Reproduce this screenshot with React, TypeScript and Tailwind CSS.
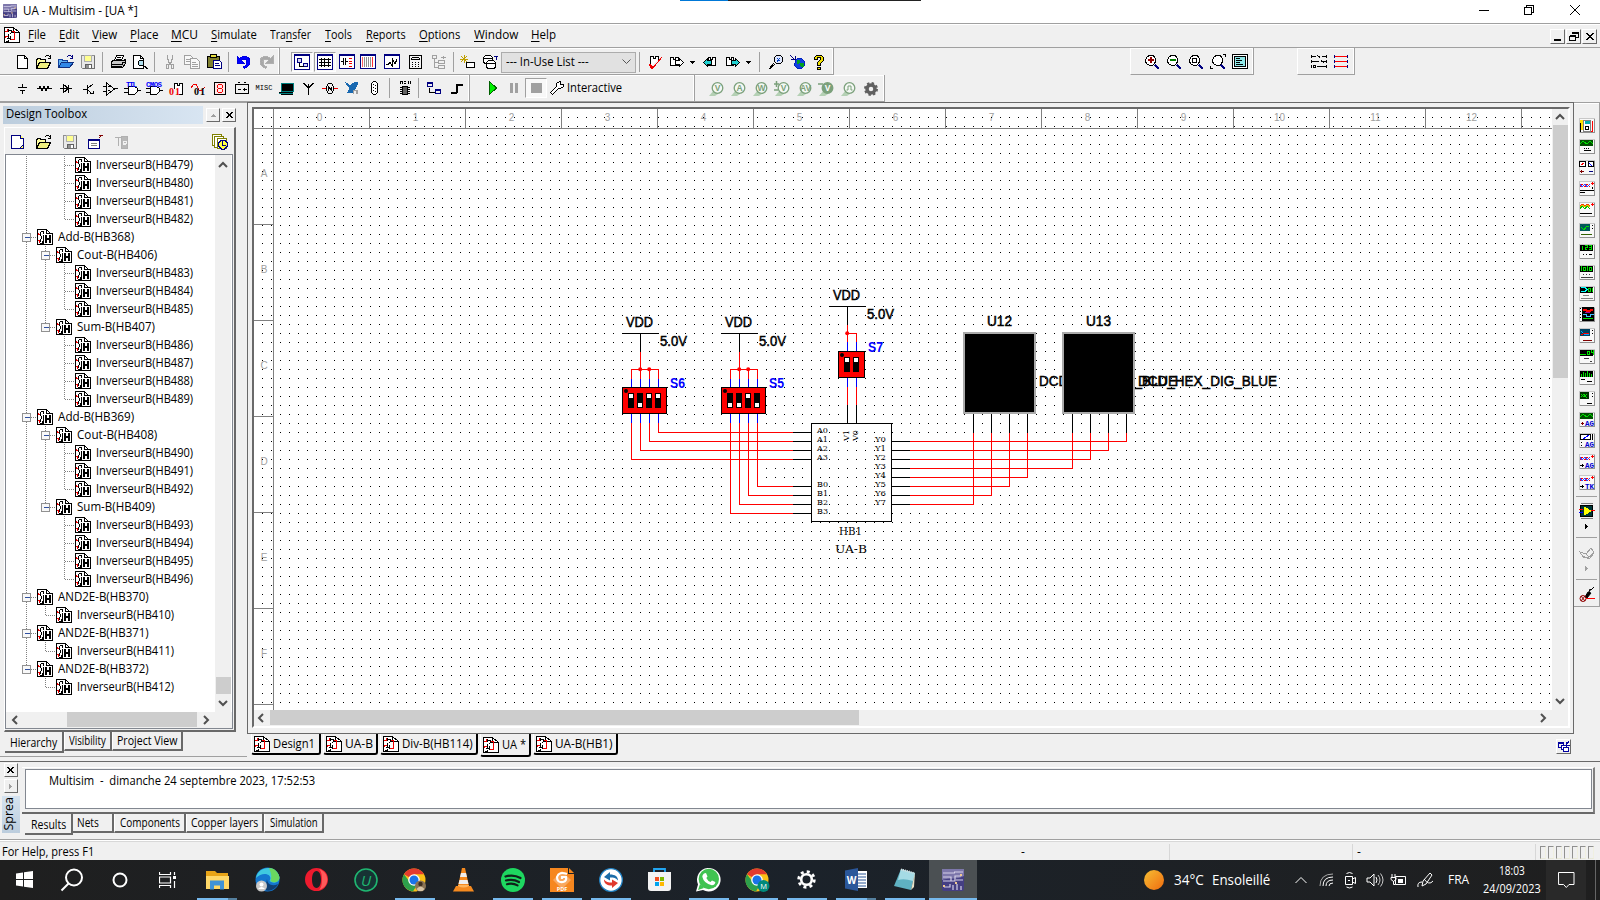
import React, { useLayoutEffect, useRef, useState } from "react";
import { FaWhatsapp } from "react-icons/fa";

/* ---------- helpers ---------- */

/** Text condensed or stretched horizontally to a known advance width. */
function Fit({ w, children, className = "" }: { w: number; children: React.ReactNode; className?: string }) {
  const ref = useRef<HTMLSpanElement>(null);
  const [k, setK] = useState(1);
  useLayoutEffect(() => {
    if (ref.current) setK(w / ref.current.offsetWidth);
  }, [w]);
  return (
    <span className={`inline-block shrink-0 whitespace-nowrap ${className}`} style={{ width: w }}>
      <span ref={ref} className="inline-block origin-left whitespace-pre" style={{ transform: `scaleX(${k})` }}>
        {children}
      </span>
    </span>
  );
}

type Shape = [d: string, stroke: string, fill?: string];

function Ico({ s, w = 16, h = 16, smooth = false }: { s: Shape[]; w?: number; h?: number; smooth?: boolean }) {
  return (
    <svg width={w} height={h} viewBox={`0 0 ${w} ${h}`} shapeRendering={smooth ? "auto" : "crispEdges"} className="block shrink-0">
      {s.map(([d, stroke, fill], i) => (
        <path key={i} d={d} stroke={stroke} fill={fill ?? "none"} />
      ))}
    </svg>
  );
}

function Cell({ children, className = "w-[22px]" }: { children?: React.ReactNode; className?: string }) {
  return <div className={`flex h-full shrink-0 items-center justify-center ${className}`}>{children}</div>;
}

function Sep({ className }: { className: string }) {
  return (
    <div className={`flex h-full shrink-0 items-center justify-center ${className}`}>
      <div className="h-5 w-px bg-[#a0a0a0]" />
    </div>
  );
}

/* ---------- icon data ---------- */
const K = "#000";
const N = "#000080";
const G = "#a0a0a0";
const R = "#f00000";

const icons: Record<string, Shape[]> = {
  blank: [["M3.5 1.5h7l3 3v10h-10z", K, "#fff"], ["M10.5 1.5v3h3", K]],
  open: [["M0.5 14.5v-9h1v-1h3v1h5v3", K, "#ffffa0"], ["M0.5 14.5l3-6h11l-3 6z", K, "#f0f080"], ["M9 2.5h1M10 1.5h3M13 2.5h1M14.5 1v4M12 4.5h3", K]],
  openBlue: [["M0.5 13.5v-8h4v1h5v2", "#1040a0", "#60b0f0"], ["M0.5 13.5l3-5h12l-4 5z", "#103080", "#3088e8"], ["M9 2.5h1M10 1.5h3M13 2.5h1M14.5 1v4M12 4.5h3", N]],
  save: [["M1.5 1.5h13v13h-12l-1-1z", "#909090", "#e8e8e8"], ["M4.5 1.5h7v6h-7z", "#b0b0b0", "#ffff90"], ["M5.5 10.5h6v4h-6z", "#606060", "#909090"], ["M10 11v3M9 11v3", "#fff"], ["M14.500 2v13M3 14.500h12", "#707070"]],
  print: [["M4.5 6.5l2-5h7l-2 5", K, "#fff"], ["M7 3.5h4M6 5.5h5", K], ["M1.5 7.5l2-1h10l2-1v4l-3 4h-11z", K, "#c8c8c8"], ["M1.5 10.5h11v-3M13 8.5h2M2 12.5h10M2 13.500h10", K]],
  preview: [["M1.5 1.5h7l3 3v10h-10z", K, "#fff"], ["M8.5 1.5v3h3", K], ["M6.5 7.5l1-1h3l1 1v3l-1 1h-3l-1-1z", K, "#b0e0f0"], ["M11 11.5h1M12 12.5h2M13 13.5h2M14 14.5h2", K]],
  cut: [["M5.5 1v4l1 1v2l3 3M10.5 1v4l-1 1v2l-3 3", G], ["M4.5 10.5h2v4h-2zM9.5 10.5h2v4h-2z", G]],
  copy: [["M0.5 1.5h6l2 2v7h-8z", G, "#f8f8f8"], ["M6.5 4.5h6l3 3v7h-9z", G, "#f8f8f8"], ["M8 8.5h4M8 10.5h6M8 12.5h6M2 5.5h4M2 7.5h4", G]],
  paste: [["M1.5 2.5h12v11h-12z", K, "#808030"], ["M4.5 0.5h6v3h-6z", K, "#e8e040"], ["M7.5 6.5h6l2 2v6h-8z", N, "#fff"], ["M9 9.5h4M9 11.5h5", N]],
  undo: [["M1 2v7h7l-2.5-2.5c2-2 6-1.500 5.500 1.500c0 2-1.500 4-3.500 5l1 1.500c4-2 5.500-4 5.500-7c0-5-6-6.500-10.500-3z", "#0000e0", "#0000ff"]],
  redo: [["M15 2v7h-7l2.500-2.500c-2-2-6-1.500-5.500 1.500c0 2 1.500 4 3.500 5l-1 1.500c-4-2-5.500-4-5.500-7c0-5 6-6.500 10.500-3z", "#b0b0b0", "#a8a8a8"]],
  hier: [["M0.5 0.500h15v15h-15zM0.500 1.500h15", N, "#fff"], ["M3.500 4.500h4v4h-4zM9.500 9.500h4v3h-4z", N, "#d8d8f0"], ["M5.500 9v3h4", K]],
  grid: [["M0.500 0.500h15v15h-15zM0.500 1.500h15", N, "#fff"], ["M2 5.500h12M2 8.500h12M2 11.500h12M4.500 4v9M7.500 4v9M11.500 4v9", K]],
  comp: [["M0.500 0.500h15v14h-15zM0.500 1.500h15", N, "#fff"], ["M2 7.500h2M4.500 4v7M6.500 4v7M7 7.500h2", K], ["M10 4.500h3M10 7.500h3M10 9.500h3M10 12.500h3", R]],
  rules: [["M0.500 0.500h15v14h-15zM0.500 1.500h15", N, "#fff"], ["M2.500 3v10", "#ff6060"], ["M4.500 3v10M6.500 3v10M8.500 3v10M10.500 3v10", "#909090"], ["M12.500 3v10", "#ff3030"]],
  wave: [["M0.500 0.500h15v14h-15zM0.500 1.500h15", N, "#fff"], ["M2 10.500h2l2-2l2 3v-7l3 5l2-4", K]],
  calc: [["M1.500 1.500h12v13h-12z", K, "#f4f4f4"], ["M4 3.500h7M4 5.500h7M3.500 4v2M11.500 4v2", K], ["M4 8.500h1M7 8.500h1M10 8.500h1M4 10.500h1M7 10.500h1M10 10.500h1M4 12.500h1M7 12.500h1M10 12.500h1", K]],
  tree: [["M1.500 1.500h4v3h-4zM7.500 6.500h6v3h-6zM7.500 11.500h6v3h-6z", G], ["M3.500 5v8h4M4 8.500h3M12.500 5v-3M10 3.500h5", G]],
  wiz: [["M4 1v8M0 5h8M1 2l6 6M7 2l-6 6", "#c0a000"], ["M6.500 8.500h8v5h-8z", K, "#fff"]],
  db: [["M1.500 3.500l2-2h5l2 2v5l-2 1h-5l-2-1z", K, "#fff"], ["M4.500 8.500l2-2h5l2 2v5l-2 1h-5l-2-1z", K, "#fff"], ["M5 9.500h8M2 4.500h8", K], ["M14.500 6v-4M12 2.500h4", N]],
  erc: [["M4.500 11.500h-1v-9h3v2h2v-2h3v3", K, "#fff"], ["M2 10l3 5l10-12M3 10l3 4", R]],
  fwd: [["M1.500 3.500h3v2h2v-2h3v8h-8z", K, "#fff"], ["M6.500 6.500h4v-2l4 4l-4 4v-2h-4z", K, "#fff"]],
  backc: [["M13.500 3.500h-3v2h-2v-2h-2v8h7z", K, "#fff"], ["M9.500 6.500h-4v-2l-4 4l4 4v-2h4z", K, "#20d0d0"]],
  fwdc: [["M1.500 3.500h3v2h2v-2h2v8h-7z", K, "#fff"], ["M6.500 6.500h4v-2l4 4l-4 4v-2h-4z", K, "#20d0d0"]],
  find: [["M6.500 3.500l2-2h4l2 2v4l-2 2h-4l-2-2z", K, "#e0e8ff"], ["M6 9l-5 6M7 10l-5 5", K], ["M9 4l3 3M12 4l-3 4", "#0040c0"]],
  globe: [["M1 1l4 4M2 5.500h4v-4", N], ["M6.500 6.500l2-2h4l3 3v4l-3 3h-4l-3-3z", "#0020c0", "#1040e0"], ["M8 6h3l-1 3h-2zM11 9h3v3h-2z", "#00a020", "#00a020"]],
  help: [["M3.500 5.500v-2l2-2h5l2 2v3l-3 3v2h-3v-3l3-3v-2h-3v2z", K, "#f0e000"], ["M6.500 13.500h3v2h-3z", K, "#f0e000"]],
  // component row
  src: [["M8.500 4v3M4 7.500h9M6 10.500h5M8.500 11v3", K]],
  res: [["M1 8.500h2l1-2l2 4l2-4l2 4l2-4l1 2h3", K]],
  diode: [["M2 8.500h12M10.500 5v8M5.500 4.500v8l5-4z", K]],
  bjt: [["M3 9.500h4M7.500 5v9M8 8l5-4M8 10l4 4M10 13.500h3v-3", K]],
  opamp: [["M4.500 3v12l8-6zM1 6.500h3M1 11.500h3M13 8.500h3M6 6.500h2M6 10.500h2", K]],
  led: [["M2.500 2.500h11v12h-11z", K, "#ffe8e8"], ["M6 4.500h4M6 8.500h4M6 12.500h4M5.500 5v3M10.500 5v3M5.500 9v3M10.500 9v3", R]],
  power: [["M1.500 4.500h13v9h-13zM4 2.500h2M10 2.500h2M4 9.500h3M9 9.500h4M10.500 8v3", K]],
  periph: [["M3.500 3.500h12v8h-12z", "#008080", "#000"], ["M0.500 13.500h14", "#008080"], ["M1 12.500h14M3 14.500h12", K]],
  rf: [["M8.500 4v11M3.500 3l5 5M13.500 3l-5 5M3 3.500h2M12 3.500h2", K]],
  motor: [["M4.500 6.500l2-3h3l2 3v4l-2 3h-3l-2-3zM6.500 11v-4l2 2l1-2v4", K], ["M0 8.500h4M12 8.500h4", R]],
  ni: [["M1 2l5 4l5-4l3 1l-2 4l-3 5h-5l2-4z", "#1868b0", "#1868b0"], ["M9 14v-4h3v4M13.500 10v4", "#a0a0a0"]],
  conn: [["M5.500 3.500l2-2h2l2 2v9l-2 2h-2l-2-2z", K, "#fff"], ["M7.500 4v1M9.500 5v1M7.500 7v1M9.500 8v1M7.500 10v1M9.500 11v1", K]],
  mcu: [["M5.500 6.500h5v8h-5z", K, "#606060"], ["M3 7.500h2M3 9.500h2M3 11.500h2M3 13.500h2M11 7.500h2M11 9.500h2M11 11.500h2M11 13.500h2", K], ["M3.500 4v-3M5.500 4v-3M7 1.500h2M7 3.500h2M11.500 1v3M13.500 1v3M3 1.500h3", K]],
  hb: [["M1.500 2.500h5v4h-5zM9.500 9.500h5v4h-5zM1 3.500h6M9 10.500h6", N], ["M3.500 8v4h5", K]],
  bus: [["M2 13.500h5.500v-9h6.500", K], ["M2 12.500h6.500v-7h5.500", K]],
  // zoom
  zin: [["M1.500 5.500l2-3l2-1h3l2 1l1 3v2l-1 2l-2 2h-3l-3-2l-1-2z", K, "#fff"], ["M4 6.500h6M4 5.500h6M6.500 3v6M7 3v6", "#900000"], ["M10 11l4 4M11 10l4 4M11 11l4 4", N]],
  zout: [["M1.500 5.500l2-3l2-1h3l2 1l1 3v2l-1 2l-2 2h-3l-3-2l-1-2z", K, "#fff"], ["M4 6.500h6M4 5.500h6", "#008000"], ["M10 11l4 4M11 10l4 4M11 11l4 4", N]],
  zarea: [["M1.500 5.500l2-3l2-1h3l2 1l1 3v2l-1 2l-2 2h-3l-3-2l-1-2z", K, "#fff"], ["M4.500 4.500h4v4h-4z", K], ["M10 11l4 4M11 10l4 4M11 11l4 4", N]],
  zfit: [["M2.500 5.500l2-3l2-1h3l2 1l1 3v2l-1 2l-2 2h-3l-3-2l-1-2z", K, "#fff"], ["M13 .5h3M15.500 0v3M0 14.500h3M.5 12v3", K], ["M10 11l4 4M11 10l4 4M11 11l4 4", N]],
  zfull: [["M0.500 0.500h15v14h-15z", K, "#fff"], ["M2.500 2.500h11v10h-11z", K, "#90e8e8"], ["M4 4.500h4M4 6.500h6M4 8.500h4M4 10.500h7", K]],
  net1: [["M1 2.500h4M7 2.500h2M11 2.500h5M1 7.500h7M10 7.500h6M6 12.500h10M2.500 11.500h2v2h-2zM.5 1v3M15.500 1v3M.5 6v3M15.500 6v3M.5 11v3M15.500 11v3M6 1l3 3M10 6l3 3", K]],
  net2: [["M1 2.500h14M1 7.500h14M1 12.500h14", "#ff0000"], ["M1.500 1v3M14.500 1v3M1.500 6v3M14.500 6v3M1.500 11v3M14.500 11v3", N]],
  // toolbox panel
  tnew: [["M1.500 1.500h9l3 3v10h-12z", N, "#fff"], ["M10.500 1.500v3h3M13 11l-3 3h3z", N, "#ffff60"]],
  rename: [["M0.500 5.500h11v9h-11z", N, "#fff"], ["M0.500 6.500h11", N], ["M3 9.500h6M3 11.500h6", "#808080"], ["M11 4l3-3M11 1.500h4", "#800000"]],
  te: [["M1 3.500h6M4.500 4v8", "#b0b0b0"], ["M7.500 2.500h6v12h-6z", "#b0b0b0", "#b8b8b8"], ["M12 10.500h-3v-3h3v2h-2", "#f0f0f0"]],
  hist: [["M0.500 0.500h9v11h-9z", "#808000", "#fff"], ["M2.500 2.500h9v11h-9z", "#808000", "#fff"], ["M5.500 4.500h9v10h-9z", "#808000", "#fff"], ["M6.500 9l3-3h3l3 3v3l-3 3h-3l-3-3z", N, "#ffff40"], ["M10.500 7v4h3", N]],
  hb16: [
    ["M0.500 0.500h9l3 3v12h-12z", K, "#fff"],
    ["M1.500 4v1M1 5.500h2M1 11.500h3M2.500 12v2", R],
    ["M4 2.500h3M3.500 3v4M6.500 3v3M9.500 1v3h3M4.500 7v3M3.500 10v3M5.500 12v3M3 14.500h3", K],
    ["M6 5h10v11h-10z", "none", "#fff"],
    ["M13 4.500h2.500v11.500M6.500 6v10M6 15.500h10", K],
    ["M8 6h2v8h-2zM12 6h2v8h-2zM10 9h2v2h-2z", "none", K],
  ],
  doc: [["M0.500 0.500h9l6 5v10h-15z", K, "#fff"], ["M9.500 0.500v5h6", K], ["M1 4.500h3M3.500 2v3M10.500 4v8h-4M1 9.500h3M1.500 9v2M8 4.500h3", R], ["M4.500 2v3M5 3.500h2l1 2l-2 1M4.500 7v4M3 11.500h3M6.500 9v4M2 14.500h2v-2", K]],
  play: [["M5.500 1.500v13l7-6.500z", "#006000", "#00f000"]],
  pause: [["M4 3h3v10h-3zM9 3h3v10h-3z", "none", "#a0a0a0"]],
  stop: [["M3 3h11v10h-11z", "none", "#a0a0a0"]],
  wrench: [["M1.500 12.500l6-6v-3l3-2h1v3h3l0 2l-3 2h-2l-6 6z", K, "#fff"]],
};

const I = ({ n }: { n: string }) => <Ico s={icons[n]} />;

function Tri() {
  return (
    <Cell className="w-[10px]">
      <Ico w={5} h={3} s={[["M0 0h5l-2.500 3z", "none", "#000"]]} />
    </Cell>
  );
}

function Logic({ label }: { label: string }) {
  const ttl = label === "TTL";
  return (
    <svg width="18" height="18" viewBox="0 0 18 18" shapeRendering="crispEdges">
      <path d="M5.500 7.500h6l3 2v3l-3 3h-6zM1 9.500h4M1 13.500h4M15 11.500h3" fill="#fff" stroke="#000" />
      <text x={ttl ? 3 : 1} y="8" fontSize="7.500" fontWeight="700" fontFamily="Liberation Mono" fill="#0000ff" textLength={ttl ? 11 : 16}>
        {label}
      </text>
    </svg>
  );
}

/** Chip outline or waveform with a pair of bold digits in front. */
function Digits({ color, chip }: { color: string; chip: boolean }) {
  return (
    <svg width="16" height="16" viewBox="0 0 16 16" shapeRendering="crispEdges">
      {chip ? <path d="M6.500 9v-6h3v2h2v-2h3v11h-4" fill="#fff" stroke="#000" /> : <path d="M1 8l3-4h2l3 6h3l3-3" fill="none" stroke={R} />}
      <text x={chip ? 1 : 4} y="15" fontSize="10" fontWeight="700" fontFamily="Liberation Serif" fill={color} textLength="11">01</text>
    </svg>
  );
}

function Probe({ t }: { t: string }) {
  const c = "#7ba07b";
  return (
    <svg width="18" height="16" viewBox="0 0 18 16">
      <path d="M1 15l5-6l4 4l-3 2z" fill="#b4d0b4" />
      <circle cx="9.500" cy="7" r="5.300" fill={t === "-V" ? c : "#f4f8f4"} stroke={c} strokeWidth="1.300" />
      {t === "P" ? (
        <path d="M6.500 9h1.500v-4h3v4h1.500" fill="none" stroke={c} />
      ) : (
        <text x="9.500" y="10" fontSize="8.500" fontWeight="700" textAnchor="middle" fontFamily="Liberation Sans" fill={t === "-V" ? "#fff" : c}>
          {t.replace(/[-+]/, "")}
        </text>
      )}
      {(t === "+V" || t === "-V") && <path d="M0 3h5" stroke={c} strokeWidth="1.500" />}
      {t === "+V" && <path d="M2.500 0v6M0 9h4" stroke={c} strokeWidth="1.500" />}
    </svg>
  );
}

/* ---------- title and menu ---------- */
function AppLogo({ size }: { size: number }) {
  return (
    <svg width={size} height={size} viewBox="0 0 22 22" className="shrink-0">
      <rect width="22" height="22" rx="2" fill="#453f83" />
      <path d="M0 0h22v7c-8 4-14 1-22 4z" fill="#8b86b5" opacity=".8" />
      <path d="M1 4h12M1 8h8v4M1 12h12v-5h6M12 3h9M11 21v-5M15 21v-6M19 21v-4M2 18h6v-3M14 11h7" stroke="#d5d0e8" strokeWidth="1.200" fill="none" />
      <path d="M18 6h2M1 17h2M13 14h2" stroke="#f0c890" strokeWidth="2" />
    </svg>
  );
}

const menus: [string, number, number, string][] = [
  ["File", 0, 18, "ml-[8px]"],
  ["Edit", 0, 20, "ml-[13px]"],
  ["View", 0, 25, "ml-[13px]"],
  ["Place", 0, 28, "ml-[13px]"],
  ["MCU", 0, 27, "ml-[13px]"],
  ["Simulate", 0, 46, "ml-[13px]"],
  ["Transfer", 3, 41, "ml-[13px]"],
  ["Tools", 0, 27, "ml-[14px]"],
  ["Reports", 0, 40, "ml-[14px]"],
  ["Options", 0, 41, "ml-[13px]"],
  ["Window", 0, 44, "ml-[14px]"],
  ["Help", 0, 25, "ml-[13px]"],
];

function TitleAndMenu() {
  return (
    <>
      <div className="flex h-[23px] shrink-0 items-center bg-white pb-[1px] pl-[3px]">
        <AppLogo size={14} />
        <Fit w={115} className="ml-[6px]">UA - Multisim - [UA *]</Fit>
        <div className="ml-[542px] h-px w-[48px] self-start bg-[#0078d7]" />
        <div className="h-px w-[193px] self-start bg-[#222]" />
        <div className="mr-[2px] ml-auto flex items-center pb-[2px]">
          <Cell className="w-[45px]"><Ico w={10} h={10} s={[["M0 5.500h10", K]]} /></Cell>
          <Cell className="w-[45px]"><Ico w={10} h={10} s={[["M.5 2.500h7v7h-7zM2.500 2v-1.500h7v7h-2", K]]} /></Cell>
          <Cell className="w-[47px]"><Ico smooth w={10} h={10} s={[["M0 0l10 10M10 0l-10 10", K]]} /></Cell>
        </div>
      </div>
      <div className="flex h-[24px] shrink-0 items-center border-t border-[#a0a0a0] pb-[2px] pl-[4px] shadow-[inset_0_1px_0_#fff]">
        <I n="doc" />
        {menus.map(([m, u, w, ml]) => (
          <Fit key={m} w={w} className={ml}>
            {m.slice(0, u)}
            <span className="underline underline-offset-2">{m[u]}</span>
            {m.slice(u + 1)}
          </Fit>
        ))}
        <div className="mt-[4px] ml-auto flex gap-px pr-[3px]">
          {["M3 10.500h7M3 9.500h7", "M2.500 6.500h6v4h-6zM2.500 5.500h6M5.500 4v-1.500h6v5h-3M5.500 3.500h6", "M3 3l7 7M10 3l-7 7M4 3l7 7M11 3l-7 7"].map((d) => (
            <div key={d} className="flex h-[15px] w-[15px] items-center justify-center border border-t-white border-r-[#696969] border-b-[#696969] border-l-white">
              <Ico w={13} h={13} s={[[d, K]]} />
            </div>
          ))}
        </div>
      </div>
    </>
  );
}

const bar = "flex h-[27px] shrink-0 items-center border-r border-b border-[#a0a0a0] shadow-[inset_0_1px_0_#fff,inset_-1px_0_0_#fff]";
const pressed = "flex h-[20px] w-[22px] items-center justify-center border border-t-[#a0a0a0] border-r-white border-b-white border-l-[#a0a0a0] bg-[#f8f8f8]";

function Toolbars() {
  return (
    <>
      <div className="flex h-[28px] shrink-0 border-t border-[#a0a0a0]">
        <div className={`${bar} w-[280px] pt-[2px] pl-[11px]`}>
          {["blank", "open", "openBlue", "save"].map((n) => <Cell key={n}><I n={n} /></Cell>)}
          <Sep className="w-[7px]" />
          <Cell className="w-[23px]"><I n="print" /></Cell><Cell className="w-[21px]"><I n="preview" /></Cell>
          <Sep className="w-[9px]" />
          {["cut", "copy", "paste"].map((n) => <Cell key={n}><I n={n} /></Cell>)}
          <Sep className="w-[7px]" />
          <Cell className="w-[23px]"><I n="undo" /></Cell><Cell><I n="redo" /></Cell>
        </div>
        <div className={`${bar} w-[554px] pt-[2px] pl-[11px]`}>
          <div className={pressed}><I n="hier" /></div>
          <div className={`${pressed} ml-[1px]`}><I n="grid" /></div>
          <Cell className="w-[21px]"><I n="comp" /></Cell><Cell><I n="rules" /></Cell>
          <Cell className="w-[25px]"><I n="wave" /></Cell>
          <Cell className="w-[24px]"><I n="calc" /></Cell>
          <Cell><I n="tree" /></Cell>
          <Sep className="w-[7px]" />
          <Cell><I n="wiz" /></Cell><Cell><I n="db" /></Cell>
          <div className="flex h-[21px] w-[135px] items-center border border-[#acacac] bg-[#e1e1e1] pl-[4px]">
            <Fit w={83}>--- In-Use List ---</Fit>
            <div className="mr-[4px] ml-auto"><Ico smooth w={9} h={6} s={[["M.5 .5l4 4l4-4", "#555"]]} /></div>
          </div>
          <Sep className="w-[7px]" />
          <Cell className="w-[24px]"><I n="erc" /></Cell>
          <Cell className="w-[20px]"><I n="fwd" /></Cell><Tri />
          <Cell className="w-[26px]"><I n="backc" /></Cell>
          <Cell className="w-[20px]"><I n="fwdc" /></Cell><Tri />
          <Sep className="w-[13px]" />
          <Cell className="w-[19px]"><I n="find" /></Cell>
          <Cell className="w-[24px]"><I n="globe" /></Cell>
          <Cell className="w-[20px]"><I n="help" /></Cell>
        </div>
        <div className={`${bar} ml-[296px] w-[124px] border-l border-l-white pt-[1px] pl-[10px]`}>
          {["zin", "zout", "zarea", "zfit", "zfull"].map((n) => <Cell key={n}><I n={n} /></Cell>)}
        </div>
        <div className={`${bar} ml-[43px] w-[58px] border-l border-l-white pt-[1px] pl-[10px]`}>
          <Cell><I n="net1" /></Cell><Cell><I n="net2" /></Cell>
        </div>
      </div>
      <div className="flex h-[26px] shrink-0">
        <div className={`${bar} w-[470px] pl-[11px]`}>
          {["src", "res", "diode", "bjt", "opamp"].map((n) => <Cell key={n}><I n={n} /></Cell>)}
          <Cell><Logic label="TTL" /></Cell><Cell><Logic label="CMOS" /></Cell>
          <Cell><Digits color="#f00000" chip /></Cell>
          <Cell><Digits color="#000" chip={false} /></Cell>
          {["led", "power"].map((n) => <Cell key={n}><I n={n} /></Cell>)}
          <Cell><span className="font-['Liberation_Mono'] text-[7px]">MISC</span></Cell>
          {["periph", "rf", "motor", "ni", "conn"].map((n) => <Cell key={n}><I n={n} /></Cell>)}
          <Sep className="w-[8px]" />
          <Cell className="w-[23px]"><I n="mcu" /></Cell>
          <Sep className="w-[5px]" />
          <Cell className="w-[26px]"><I n="hb" /></Cell>
          <Cell className="w-[20px]"><I n="bus" /></Cell>
        </div>
        <div className={`${bar} w-[225px] pl-[10px]`}>
          <Cell className="w-[23px]"><I n="play" /></Cell>
          <Cell><I n="pause" /></Cell>
          <div className={pressed}><I n="stop" /></div>
          <Cell className="w-[20px]"><I n="wrench" /></Cell>
          <Fit w={55} className="-mt-px">Interactive</Fit>
        </div>
        <div className={`${bar} w-[190px] pt-[1px] pl-[11px]`}>
          {["V", "A", "W", "+V", "AV", "-V", "P"].map((t) => <Cell key={t}><Probe t={t} /></Cell>)}
          <Cell>
            <svg width="14" height="14" viewBox="0 0 14 14">
              <circle cx="7" cy="7" r="4" fill="none" stroke="#606060" strokeWidth="3.500" />
              <circle cx="7" cy="7" r="6" fill="none" stroke="#606060" strokeWidth="2" strokeDasharray="2.400 2.300" />
            </svg>
          </Cell>
        </div>
      </div>
    </>
  );
}

/* ---------- design toolbox ---------- */
type Row = [level: 1 | 2 | 3, label: string, last?: boolean];
const inv = (n: number, last = false): Row => [3, `InverseurB(HB${n})`, last];
const rows: Row[] = [
  inv(479), inv(480), inv(481), inv(482, true),
  [1, "Add-B(HB368)"], [2, "Cout-B(HB406)"], inv(483), inv(484), inv(485, true),
  [2, "Sum-B(HB407)", true], inv(486), inv(487), inv(488), inv(489, true),
  [1, "Add-B(HB369)"], [2, "Cout-B(HB408)"], inv(490), inv(491), inv(492, true),
  [2, "Sum-B(HB409)", true], inv(493), inv(494), inv(495), inv(496, true),
  [1, "AND2E-B(HB370)"], [2, "InverseurB(HB410)", true],
  [1, "AND2E-B(HB371)"], [2, "InverseurB(HB411)", true],
  [1, "AND2E-B(HB372)", true], [2, "InverseurB(HB412)", true],
];

const labelWidth = (s: string) =>
  s.startsWith("Inv") ? 97 : s.startsWith("Add") ? 76 : s.startsWith("Cout") ? 80 : s.startsWith("Sum") ? 78 : 91;

function Guides({ row, index }: { row: Row; index: number }) {
  const [level, label, last] = row;
  const branch = !label.startsWith("Inv");
  const x = 20.5 + (level - 1) * 19;
  const d = [];
  if (level > 1 && index < 28) d.push("M20.5 0V18");
  if (level === 3 && (index < 9 ? index > 4 && index < 9 : index > 14 && index < 19)) d.push("M39.5 0V18");
  d.push(`M${x} 0V${last ? 9 : 18}M${x} 9.5h10`);
  return (
    <svg width={x + 10.5} height="18" viewBox={`0 0 ${x + 10.5} 18`} shapeRendering="crispEdges" className="shrink-0">
      <path d={d.join("")} stroke="#808080" strokeDasharray="1 1" fill="none" />
      {branch && (
        <>
          <rect x={x - 4} y="5.500" width="8" height="8" rx="1" fill="#f8f8f8" stroke="#919191" />
          <path d={`M${x - 2} 9.500h5`} stroke="#3050a0" />
        </>
      )}
    </svg>
  );
}

const chev = {
  up: "M1 6l4-4l4 4",
  down: "M1 2l4 4l4-4",
  left: "M6 1l-4 4l4 4",
  right: "M2 1l4 4l-4 4",
};
function Chev({ dir }: { dir: keyof typeof chev }) {
  const v = dir === "up" || dir === "down";
  return (
    <svg width={v ? 10 : 8} height={v ? 8 : 10} viewBox={v ? "0 0 10 8" : "0 0 8 10"} className="shrink-0">
      <path d={chev[dir]} fill="none" stroke="#505050" strokeWidth="2" />
    </svg>
  );
}

function Tab({ label, w, tw, active = false }: { label: string; w: string; tw: number; active?: boolean }) {
  return (
    <div
      className={`flex shrink-0 items-center justify-center border-r-2 border-b-2 border-[#696969] bg-[#f0f0f0] ${w} ${
        active ? "h-[21px] pt-[3px]" : "h-[19px] border-l border-l-white pt-[1px]"
      }`}
    >
      <Fit w={tw}>{label}</Fit>
    </div>
  );
}

const capBtn = "flex h-[14px] w-[14px] items-center justify-center border border-t-white border-r-[#696969] border-b-[#696969] border-l-white bg-[#f0f0f0]";
const closeX: Shape[] = [["M1 1l6 6M2 1l6 6M7 1l-6 6M8 1l-6 6", K]];

function Toolbox() {
  return (
    <div className="flex h-[656px] w-[247px] shrink-0 flex-col border-t-2 border-b border-[#a0a0a0]">
      <div className="flex h-[24px] items-start pt-[3px] pl-[3px]">
        <div className="flex h-[18px] w-[200px] items-center bg-linear-to-r from-[#bccddd] to-[#d8e5f2] pb-[2px] pl-[3px]">
          <Fit w={81}>Design Toolbox</Fit>
        </div>
        <div className={`${capBtn} mt-[2px] ml-[3px]`}><Ico w={6} h={3} s={[["M0 3h6l-3-3z", "none", "#a0a0a0"]]} /></div>
        <div className={`${capBtn} mt-[2px] ml-[2px]`}><Ico w={9} h={9} s={closeX} /></div>
      </div>
      <div className="ml-[4px] flex h-[605px] w-[232px] shrink-0 flex-col border-t border-r-2 border-b-2 border-l border-t-white border-r-[#696969] border-b-[#696969] border-l-white">
        <div className="flex h-[26px] shrink-0 items-center pt-[2px] pl-[4px]">
          <Cell className="w-[18px]"><I n="tnew" /></Cell>
          <Cell className="ml-[8px] w-[18px]"><I n="open" /></Cell>
          <Cell className="ml-[8px] w-[18px]"><I n="save" /></Cell>
          <Cell className="ml-[8px] w-[18px]"><I n="rename" /></Cell>
          <Cell className="ml-[8px] w-[18px]"><I n="te" /></Cell>
          <Cell className="ml-[80px] w-[18px]"><I n="hist" /></Cell>
        </div>
        <div className="flex h-[575px] w-[228px] shrink-0 flex-col border border-[#828790] bg-white">
          <div className="flex h-[557px] shrink-0 overflow-hidden">
            <div className="flex w-[209px] flex-col pt-px">
              {rows.map((r, i) => (
                <div key={i} className="flex h-[18px] shrink-0 items-center">
                  <Guides row={r} index={i} />
                  <I n="hb16" />
                  <Fit w={labelWidth(r[1])} className="-mt-px ml-[5px]">{r[1]}</Fit>
                </div>
              ))}
            </div>
            <div className="flex w-[16px] flex-col items-center bg-[#f0f0f0] pt-[6px]">
              <Chev dir="up" />
              <div className="mt-[508px] h-[17px] w-[15px] shrink-0 bg-[#cdcdcd]" />
              <div className="mt-[5px]"><Chev dir="down" /></div>
            </div>
          </div>
          <div className="flex h-[16px] items-center bg-[#f0f0f0] pb-px pl-[5px]">
            <Chev dir="left" />
            <div className="ml-[48px] h-[15px] w-[130px] bg-[#cdcdcd]" />
            <div className="ml-[5px]"><Chev dir="right" /></div>
          </div>
        </div>
      </div>
      <div className="flex items-start pl-[5px]">
        <Tab label="Hierarchy" w="w-[59px]" tw={47} active />
        <Tab label="Visibility" w="w-[48px]" tw={37} />
        <Tab label="Project View" w="w-[71px]" tw={60} />
      </div>
    </div>
  );
}

/* ---------- schematic ---------- */
const LX = 254;
const LY = 109;

function Label({ x, y, w, size = 14, children, fill = "#000", bold = false, slab = false, rot }: {
  x: number; y: number; w: number; size?: number; children: string; fill?: string; bold?: boolean; slab?: boolean; rot?: string;
}) {
  return (
    <text x={x} y={y} fontSize={size} textLength={w} lengthAdjust="spacingAndGlyphs" fill={fill} fontWeight={bold ? 700 : 400}
      fontFamily={slab ? "DejaVu Serif, serif" : "Liberation Sans, sans-serif"} stroke={fill} strokeWidth={bold || slab ? 0 : 0.5} transform={rot}>
      {children}
    </text>
  );
}

function Dip({ x, y, name, up, nx }: { x: number; y: number; name: string; up: boolean[]; nx: number }) {
  const w = up.length * 9 + 8;
  return (
    <g>
      <g shapeRendering="crispEdges">
        <rect x={x + 0.5} y={y + 0.5} width={w} height="26" fill="#ff0000" stroke="#000" />
        {up.map((u, i) => (
          <g key={i}>
            <rect x={x + 6 + i * 9} y={y + 6} width="6" height="15" fill="#000" />
            <rect x={x + 7 + i * 9} y={u ? y + 7 : y + 16} width="4" height="4" fill="#fff" />
          </g>
        ))}
      </g>
      <circle cx={x + 4} cy={y + 4} r="2" />
      <Label x={nx} y={y + 1} w={15} fill="#0000ff" bold>{name}</Label>
    </g>
  );
}

function Vdd({ x, y }: { x: number; y: number }) {
  return (
    <g>
      <path d={`M${x - 18} ${y + 0.5}h37M${x + 0.5} ${y}v19`} stroke="#000" shapeRendering="crispEdges" />
      <Label x={x - 14} y={y - 6} w={27}>VDD</Label>
      <Label x={x + 20} y={y + 13} w={27}>5.0V</Label>
    </g>
  );
}

function Schematic() {
  const pins = [0, 1, 2, 3];
  const red: string[] = [];
  const blue: string[] = [];
  const black: string[] = [];
  [631, 730].forEach((bx, b) => {
    red.push(`M${bx + 9.5} 352v17M${bx} 369.5h28`);
    pins.forEach((i) => {
      const x = bx + i * 9 + 0.5;
      const y = (b ? 513 : 459) - i * 9 + 0.5;
      red.push(`M${x} 369v10M${x} 423V${y}H793`);
      blue.push(`M${x} 379v8M${x} 414v9`);
      black.push(`M793 ${y}h18`);
    });
  });
  red.push("M847.5 324v18M847 333.5h9.5v9M847.5 387v18M856.5 387v18");
  blue.push("M847.5 342v9M856.5 342v9M847.5 378v9M856.5 378v9");
  black.push("M847.5 405v18M856.5 405v18");
  [1126, 1108, 1090, 1072, 1027, 1009, 991, 973].forEach((x, i) => {
    const y = 441.5 + i * 9;
    black.push(`M892 ${y}h18M${x + 0.5} 414v19`);
    red.push(`M910 ${y}H${x + 0.5}V433`);
  });
  return (
    <svg width="1298" height="601" viewBox={`${LX} ${LY} 1298 601`} className="block shrink-0">
      <defs>
        <pattern id="dots" x="1" y="0" width="9" height="9" patternUnits="userSpaceOnUse">
          <rect width="1" height="1" fill="#000" />
        </pattern>
      </defs>
      <rect x={LX} y={LY} width="1298" height="601" fill="#fff" />
      <g fontFamily="Liberation Sans, sans-serif" fontSize="10" fill="#a0a0a0" textAnchor="middle">
        {Array.from({ length: 13 }, (_, i) => <text key={i} x={319.5 + i * 96} y="121">{i}</text>)}
        {["A", "B", "C", "D", "E", "F"].map((c, i) => <text key={c} x="264" y={177 + i * 96}>{c}</text>)}
      </g>
      <rect x={LX} y={LY} width="1298" height="601" fill="url(#dots)" shapeRendering="crispEdges" />
      <g shapeRendering="crispEdges" fill="none">
        <path stroke="#808080" d={"M254 128.5H1552M273.5 109V710" + Array.from({ length: 13 }, (_, i) => `M${369.5 + i * 96} 109v19`).join("") + Array.from({ length: 6 }, (_, i) => `M254 ${224.5 + i * 96}h19`).join("")} />
        <path stroke="#ff0000" d={red.join("")} />
        <path stroke="#0000ff" d={blue.join("")} />
        <path stroke="#000" d={black.join("")} />
        <rect x="811.5" y="423.5" width="80" height="98" stroke="#000" />
      </g>
      {[[640, 369], [649, 369], [739, 369], [748, 369], [847, 333]].map(([x, y]) => <circle key={`${x}${y}`} cx={x + 0.2} cy={y + 0.2} r="2" fill="#f00" />)}
      <Vdd x={640} y={333} /><Vdd x={739} y={333} /><Vdd x={847} y={306} />
      <Dip x={622} y={387} name="S6" nx={670} up={[true, false, true, true]} />
      <Dip x={721} y={387} name="S5" nx={769} up={[false, false, true, false]} />
      <Dip x={838} y={351} name="S7" nx={868} up={[true, true]} />
      {pins.map((i) => (
        <g key={i}>
          <Label slab size={8} x={817} y={433 + i * 9} w={11}>{`A${i}`}</Label>
          <Label slab size={8} x={817} y={487 + i * 9} w={11}>{`B${i}`}</Label>
        </g>
      ))}
      {Array.from({ length: 8 }, (_, i) => <Label key={i} slab size={8} x={875} y={442 + i * 9} w={11}>{`Y${i}`}</Label>)}
      <Label slab size={8} x={0} y={0} w={11} rot="translate(849 441) rotate(-90)">V1</Label>
      <Label slab size={8} x={0} y={0} w={11} rot="translate(858 441) rotate(-90)">V0</Label>
      <Label slab size={11} x={839} y={535} w={23}>HB1</Label>
      <Label slab size={11} x={835} y={553} w={32}>UA-B</Label>
      <Label x={1039} y={386} w={138}>DCD_HEX_DIG_BLUE</Label>
      <Label x={1138} y={386} w={139}>DCD_HEX_DIG_BLUE</Label>
      {[963, 1062].map((x, i) => (
        <g key={x}>
          <rect x={x + 1} y="333" width="71" height="80" fill="#000" stroke="#aaa" strokeWidth="2" />
          <Label x={x + 24} y={326} w={25}>{i ? "U13" : "U12"}</Label>
        </g>
      ))}
    </svg>
  );
}

function DocTab({ label, tw, w, active = false }: { label: string; tw: number; w: string; active?: boolean }) {
  return (
    <div className={`flex shrink-0 items-center rounded-b-[3px] border-r-2 border-b-2 border-l border-black border-l-[#fff] pl-[2px] ${w} ${active ? "h-[23px]" : "h-[21px]"}`}>
      <I n="doc" />
      <Fit w={tw} className="ml-[3px]">{label}</Fit>
    </div>
  );
}

function Center() {
  return (
    <div className="flex w-[1327px] shrink-0 flex-col pt-px">
      <div className="h-[632px] border border-[#696969] pt-[4px] pl-[4px]">
        <div className="flex h-[621px] w-[1318px] flex-col border-t-2 border-r-2 border-b-2 border-l-2 border-t-[#696969] border-r-white border-b-white border-l-[#696969] bg-[#f0f0f0]">
          <div className="flex h-[601px]">
            <Schematic />
            <div className="flex w-[16px] flex-col items-center bg-[#f0f0f0] pt-[4px]">
              <Chev dir="up" />
              <div className="mt-[4px] h-[253px] w-[15px] shrink-0 bg-[#cdcdcd]" />
              <div className="mt-auto mb-[5px]"><Chev dir="down" /></div>
            </div>
          </div>
          <div className="flex h-[16px] items-center pb-px pl-[3px]">
            <Chev dir="left" />
            <div className="ml-[5px] h-[15px] w-[589px] bg-[#cdcdcd]" />
            <div className="ml-[680px]"><Chev dir="right" /></div>
          </div>
        </div>
      </div>
      <div className="flex items-start gap-[2px] pl-[4px]">
        <DocTab label="Design1" tw={42} w="w-[70px]" />
        <DocTab label="UA-B" tw={28} w="w-[55px]" />
        <DocTab label="Div-B(HB114)" tw={71} w="w-[98px]" />
        <DocTab label="UA *" tw={24} w="w-[51px]" active />
        <DocTab label="UA-B(HB1)" tw={58} w="w-[85px]" />
        <div className="mt-[5px] mr-[3px] ml-auto flex h-[15px] w-[15px] items-center justify-center border border-t-white border-r-[#696969] border-b-[#696969] border-l-white">
          <Ico w={12} h={12} s={[["M.5 1.500h5v5h-5zM.5 2.500h5", "#0000a0"], ["M3.500 4.500h5v4h-5z", "#0000a0", "#fff"], ["M5.500 6.500h5v4h-5zM11 .5l-3 3M8.500 1v3h3", "#0000a0", "#fff"]]} />
        </div>
      </div>
    </div>
  );
}

/* ---------- instruments ---------- */
const GN = "#00e000";
const screen = (c = "#000"): Shape => ["M1 1h13v6h-13z", "none", c];
const instruments: Shape[][] = [
  [["M1 2h3v10h-3z", "none", "#ffe000"], ["M1.500 5v9", K], ["M4.500 2.500h7v11h-7z", "#808080", "#fff"], ["M6 3h5v3h-5z", "none", "#00b0b0"], ["M6.500 8.500h3v3h-3z", K], ["M13.500 3v11M12 13.500h2", "#f00"]],
  [screen("#005000"), ["M1 5l3-3l4 3l3-3l3 3", GN], ["M5 9.500h1M7 9.500h1M9 9.500h1M5 11.500h7", K]],
  [["M.5 1.500h6v5h-6zM9.500 1.500h5v5h-5z", K, "#fff"], ["M2 5l3-2", "#f00"], ["M10 3l3 3", "#00f"], ["M1 11.500h4M2.500 10v3", "#800000"], ["M10 11.500h4", N]],
  [["M1 6l2-3l3 3l2-3l3 3", "#f00"], ["M1 3l2 3l3-3l2 3l3-3", "#4040f0"], ["M1 11.500h5M.500 9.500h14", K], ["M13.500 1v3M12 2.500h3", "#f00"], ["M13.500 6v2", K]],
  [["M1 4l2-2l3 2l2-2l3 2", "#f04000"], ["M1 5l2-2l3 2l2-2l3 2", "#e0c000"], ["M1 7l2-3l3 3l2-3l3 3", "#00c000"], ["M13.500 1v3M12 2.500h3", "#f00"], ["M1 11.500h12", K]],
  [["M1 1h10v7h-10z", "none", "#005858"], ["M2 4l3 3l3-4l2 1", GN], ["M13.500 2v1M13.500 5v1", K], ["M2 11.500h11", "#306000"]],
  [screen(), ["M3.500 2v4M6 1.500h2v2h-2v2h2M10 1.500h2v4h-2M10 3.500h2", GN], ["M4 10.500h1M7 10.500h1M10 10.500h3", K]],
  [screen(), ["M2.500 1v5M4.500 2.500h2v3h-2zM8.500 1v5M10.500 2.500h2v3h-2z", GN], ["M4 9.500h1M7 9.500h1M10 9.500h1M2 12.500h12", "#404040"]],
  [screen(), ["M2 1.500h4l2 2l-2 2h-4", "#00ffff"], ["M9.500 2.500h2v3h-2zM13.500 2v4", GN], ["M4 9.500h6M2 12.500h12", "#808080"]],
  [["M3 0h12v14h-12z", "none", "#000"], ["M4 2.500h3v2h4v-2h3M4 3.500h10", "#f00"], ["M4 7.500h3l1 2h3l1-2h3", "#40c0ff"], ["M4 11.500h10", GN], ["M6 5.500h5", "#a000a0"], ["M1.500 1v1M1.500 4v1M1.500 7v1M1.500 10v1", K]],
  [["M1 1h10v7h-10z", "none", "#004060"], ["M2 3l3 3h5", "#00a0ff"], ["M2 7l4-2h4", "#f00"], ["M13.500 2v1M13.500 5v1", K], ["M4 12.500h9", "#800000"]],
  [screen(), ["M8.500 2.500h2v3h-2zM12.500 1v2h2v-2M14.500 2v4M1 5.500h6", GN], ["M5 9.500h5M11 12.500h2", "#404040"]],
  [screen(), ["M2.500 4v3M4.500 2v5M6.500 3v4M8.500 1v6M10.500 3v4M12.500 4v3", GN], ["M2 9.500h4M8 11.500h5", K]],
  [["M1 1h9v7h-9z", "none", "#003000"], ["M2 3l3 3l3-3M2 6l3-3l3 4", GN], ["M13.500 2v1M13.500 5v1", K], ["M8 12.500h5", K]],
];

function Instrument({ s, tag }: { s: Shape[]; tag?: string }) {
  return (
    <svg width="16" height="15" viewBox="0 0 16 15" shapeRendering="crispEdges" className="mb-[6px] shrink-0">
      <path d="M.5 .5h15v14h-15z" fill="#f8f8f8" stroke="#c8c8c8" />
      <path d="M.5 14.500h15v-14" fill="none" stroke="#909090" />
      {s.map(([d, st, f], i) => <path key={i} d={d} stroke={st} fill={f ?? "none"} />)}
      {tag && <text x="6" y="13.500" fontSize="7.500" fontWeight="700" fontFamily="Liberation Mono" fill="#0000d0">{tag}</text>}
    </svg>
  );
}

function InstrumentBar() {
  const wave: Shape[] = [instruments[3][0], instruments[3][1], instruments[3][3], ["M1 11.500h4M3.500 10v3", K]];
  return (
    <div className="w-[26px] shrink-0 pt-px">
      <div className="flex h-[505px] w-[26px] flex-col items-center border-t border-r border-b border-[#a0a0a0] pt-[15px] shadow-[inset_0_1px_0_#fff]">
        {instruments.map((s, i) => <Instrument key={i} s={s} />)}
        <Instrument tag="AG" s={[screen("#005000"), ["M1 5l3-3l4 3l3-3l3 3", GN], ["M2 11.500h3M3.500 10v3", "#800000"]]} />
        <Instrument tag="AG" s={[["M1.500 1.500h10v5h-10z", K, "#fff"], ["M4 6l6-4", "#00f"], ["M13.500 1v6M2.500 9v1M2.500 12v1", K]]} />
        <Instrument tag="AG" s={wave} />
        <Instrument tag="TK" s={wave} />
        <div className="h-px w-[21px] shrink-0 bg-[#a0a0a0]" />
        <div className="mt-[6px]">
          <Ico s={[["M1.500 2.500h12v11h-12z", K, "#003838"], ["M2 .5h12M2 15.500h12", "#808080"], ["M5 4v8l7-4z", "#ff0", "#ff0"], ["M0 6.500h4M12 7.500h4", "#f00"], ["M0 9.500h4", "#00f"]]} />
        </div>
        <div className="mt-[5px]"><Ico w={3} h={5} s={[["M0 0v5l3-2.500z", "none", K]]} /></div>
        <div className="mt-[8px] h-px w-[21px] shrink-0 bg-[#a0a0a0]" />
        <div className="mt-[8px]"><Ico s={[["M1 6l6 2l5-6l3 4l-6 6l-5-1zM7 8l3 3M4 10l6 3l5-6", G]]} /></div>
        <div className="mt-[4px]"><Ico w={3} h={5} s={[["M0 0v5l3-2.500z", "none", G]]} /></div>
        <div className="mt-[8px] mb-[7px] h-px w-[21px] shrink-0 bg-[#a0a0a0]" />
        <Ico smooth s={[["M6 10l3-5l3 1l-4 5zM10 5l1-3l1 1l3-3", K, K], ["M1 11.500a3 3 0 1 0 6 0a3 3 0 1 0-6 0M2 9l4 5M6 9l-4 5", "#900000"], ["M7 11.500h9", "#f00"]]} />
      </div>
    </div>
  );
}

/* ---------- results and status ---------- */
function Results() {
  return (
    <div className="flex h-[78px] shrink-0 border-t border-[#696969]">
      <div className="flex w-[22px] shrink-0 flex-col items-center pt-[1px] pr-[1px]">
        <div className={capBtn}><Ico w={9} h={9} s={closeX} /></div>
        <div className={`${capBtn} mt-[2px]`}><Ico w={3} h={5} s={[["M0 0v5l3-2.500z", "none", G]]} /></div>
        <div className="mt-[3px] flex h-[37px] w-[18px] items-center justify-center bg-linear-to-b from-[#d5e3f0] to-[#bccddd] pr-[3px] pb-[2px]">
          <span className="rotate-180 text-[12.5px] [writing-mode:vertical-rl]">Sprea</span>
        </div>
      </div>
      <div className="flex flex-1 flex-col pt-[5px]">
        <div className="h-[47px] w-[1573px] border-t border-r-2 border-b-2 border-t-white border-r-[#808080] border-b-[#696969] pt-px pl-[3px]">
          <div className="flex h-[40px] w-[1567px] border border-[#828790] bg-white pt-[3px] pl-[23px]">
            <Fit w={266}>{"Multisim  -  dimanche 24 septembre 2023, 17:52:53"}</Fit>
          </div>
        </div>
        <div className="flex items-start pl-[3px]">
          <Tab label="Results" w="w-[48px]" tw={35} active />
          <div className="flex h-[19px] w-[41px] items-center border-r-2 border-b-2 border-[#696969] pt-[1px] pl-[4px]"><Fit w={22}>Nets</Fit></div>
          <Tab label="Components" w="w-[72px]" tw={60} />
          <Tab label="Copper layers" w="w-[78px]" tw={67} />
          <Tab label="Simulation" w="w-[60px]" tw={48} />
        </div>
      </div>
    </div>
  );
}

function Status() {
  return (
    <div className="flex h-[21px] shrink-0 items-center border-t border-[#a0a0a0] pt-[4px] pl-[2px] shadow-[inset_0_1px_0_#fff,inset_0_2px_0_#d8d8d8]">
      <Fit w={92}>For Help, press F1</Fit>
      <span className="ml-[927px] w-[148px]">-</span>
      <div className="h-full w-px bg-[#d7d7d7]" />
      <div className="ml-[182px] h-full w-px bg-[#d7d7d7]" />
      <span className="ml-[4px] w-[178px]">-</span>
      <div className="h-full w-px bg-[#d7d7d7]" />
      <div className="ml-[4px] flex gap-[2px]">
        {Array.from({ length: 7 }, (_, i) => <div key={i} className="h-[13px] w-[6px] border border-t-[#909090] border-r-[#f0f0e0] border-b-[#e8e8d8] border-l-[#909090]" />)}
      </div>
    </div>
  );
}

/* ---------- taskbar ---------- */
function Chrome({ badge }: { badge: "user" | "M" }) {
  return (
    <svg width="25" height="24" viewBox="0 0 25 24">
      <circle cx="12" cy="12" r="11.500" fill="#fbc116" />
      <path d="M12 12L2 6.200A11.500 11.500 0 0 1 22 6.200H12z" fill="#e33b2e" />
      <path d="M2 6.200A11.500 11.500 0 0 0 11 23.500L16 15l-4-3-5 1z" fill="#2da04c" />
      <circle cx="12" cy="12" r="5.800" fill="#fff" /><circle cx="12" cy="12" r="4.500" fill="#1a73e8" />
      {badge === "M" ? (
        <><circle cx="18.500" cy="18" r="6" fill="#00897b" /><text x="18.500" y="20.500" fontSize="7.500" textAnchor="middle" fill="#fff">M</text></>
      ) : (
        <><circle cx="18.500" cy="18" r="5.500" fill="#8a7355" /><circle cx="18.500" cy="16" r="2.200" fill="#3f2f22" /><path d="M14.500 21q4-5 8 0l-2 2h-4z" fill="#d6c3a5" /></>
      )}
    </svg>
  );
}

const taskIcons: { w: string; el: React.ReactNode; line?: string; split?: boolean; active?: boolean }[] = [
  { w: "w-[48px]", el: <svg width="17" height="17" viewBox="0 0 17 17"><path d="M0 2.500l7-1v6.500h-7zM8 1.300l9-1.300v8h-9zM0 9h7v6.500l-7-1zM8 9h9v8l-9-1.300z" fill="#fff" /></svg> },
  { w: "w-[48px]", el: <svg width="24" height="24" viewBox="0 0 24 24"><circle cx="14" cy="9.500" r="8" fill="none" stroke="#fff" strokeWidth="2" /><path d="M8.500 15.500l-7 7" stroke="#fff" strokeWidth="2" /></svg> },
  { w: "w-[48px]", el: <svg width="16" height="16" viewBox="0 0 16 16"><circle cx="8" cy="8" r="6.500" fill="none" stroke="#fff" strokeWidth="2" /></svg> },
  { w: "w-[47px]", el: <svg width="17" height="16" viewBox="0 0 17 16"><path d="M.5 0v2.500h11v-2.500M.5 5h11v6h-11zM.5 16v-2.500h11v2.500M15.500 0v3M15.500 9v7" fill="none" stroke="#fff" strokeWidth="1.200" /><path d="M14 4h3v3h-3z" fill="#fff" /></svg> },
  { w: "w-[52px]", line: "w-[40px]", split: true, el: <svg width="23" height="20" viewBox="0 0 23 20"><path d="M0 1h9l2 2h11v16h-22z" fill="#e8a417" /><path d="M0 6h23v13h-23z" fill="#ffd868" /><path d="M4 19.500v-9h14v9h-4v-4h-6v4z" fill="#3f93d8" /></svg> },
  { w: "w-[49px]", el: <svg width="25" height="25" viewBox="0 0 25 25"><circle cx="12.500" cy="12.500" r="12" fill="#1477cf" /><path d="M1 11C3-1 21-3 24.500 10c0 6-6 7-10 4c4-7-7-10-13.500-3z" fill="#3fc9e0" /><path d="M14 1c6 0 10 5 10.500 10c-1 5-6 5-9 3c2-5 0-9-1.500-13z" fill="#6ad860" /><path d="M12 12c0 5 5 8 11 5c-2 5-8 8-13 6z" fill="#103f72" /><circle cx="6.500" cy="19" r="5.500" fill="#c9c9c9" /><circle cx="6.500" cy="17.500" r="2" fill="#fff" /><path d="M3 22q3.500-4 7 0z" fill="#fff" /></svg> },
  { w: "w-[49px]", el: <svg width="23" height="23" viewBox="0 0 23 23"><path fillRule="evenodd" d="M11.500 0a11.500 11.500 0 1 0 0 23a11.500 11.500 0 1 0 0-23zm0 3c3 0 4.500 4 4.500 8.500s-1.500 8.500-4.500 8.500s-4.500-4-4.500-8.500s1.500-8.500 4.500-8.500z" fill="#ee1b2e" /><path d="M14 1c11 3 11 18 0 21c4-3 4-18 0-21z" fill="#ff5a5a" /></svg> },
  { w: "w-[49px]", el: <svg width="24" height="24" viewBox="0 0 24 24"><circle cx="12" cy="12" r="11" fill="#173334" stroke="#1fb671" strokeWidth="1.600" /><text x="12" y="17.500" fontSize="15" fontStyle="italic" textAnchor="middle" fill="#1fb671">U</text></svg> },
  { w: "w-[49px]", line: "w-[40px]", el: <Chrome badge="user" /> },
  { w: "w-[49px]", el: <svg width="21" height="24" viewBox="0 0 21 24"><path d="M9 0h3l4 18h-11z" fill="#f58a1f" /><path d="M8 5h5l1 4h-7zM6.500 12h8l1 4h-10z" fill="#eee" /><path d="M3 18h15l3 5.500h-21z" fill="#f58a1f" /><path d="M5 18q5.500 3 11 0v-1h-11z" fill="#ffb45c" /></svg> },
  { w: "w-[49px]", line: "w-[40px]", el: <svg width="24" height="24" viewBox="0 0 24 24"><circle cx="12" cy="12" r="12" fill="#1ed760" /><path d="M4.500 8.500q8-2.500 15 1.500M5 12.500q7-2 13 1.500M6 16.200q6-1.500 10.500 1.200" fill="none" stroke="#10221a" strokeWidth="2.200" strokeLinecap="round" /></svg> },
  { w: "w-[49px]", line: "w-[40px]", el: <svg width="24" height="24" viewBox="0 0 24 24"><path d="M0 0h18v6h6v18h-24z" fill="#f6871f" /><path d="M19 0l5 5h-5z" fill="#f6871f" /><path d="M12 3l9 9-9 9-9-9z" fill="#f9a860" /><path d="M17 6q-8-3-10 3q0 6 6 5q4-1 3-5h-4v2" fill="none" stroke="#fff" strokeWidth="2.200" /><text x="12" y="23" fontSize="5.500" fontWeight="700" textAnchor="middle" fill="#fff">PDF</text></svg> },
  { w: "w-[49px]", line: "w-[40px]", el: <svg width="24" height="24" viewBox="0 0 24 24"><circle cx="12" cy="12" r="11.300" fill="#fff" stroke="#2182c4" strokeWidth="1.300" /><path d="M5 9l6-5v2.500c5 0 8 2 8 6c-2-2.500-4-3-8-3v3z" fill="#1b6ca8" /><path d="M19 15l-6 5v-2.500c-5 0-8-2-8-6c2 2.500 4 3 8 3v-3z" fill="#e03a2e" /></svg> },
  { w: "w-[49px]", el: <svg width="23" height="23" viewBox="0 0 23 23"><path d="M6 6v-5h11v5" fill="none" stroke="#22a6f2" strokeWidth="1.800" /><path d="M0 4h23v16q0 3-3 3h-17q-3 0-3-3z" fill="#f3f3f3" /><path d="M7 9h4v4h-4z" fill="#f25022" /><path d="M12 9h4v4h-4z" fill="#7fba00" /><path d="M7 14h4v4h-4z" fill="#00a4ef" /><path d="M12 14h4v4h-4z" fill="#ffb900" /></svg> },
  {
    w: "w-[49px]", line: "w-[40px]",
    el: (
      <div className="grid place-items-center">
        <svg width="25" height="25" viewBox="0 0 25 25" className="col-start-1 row-start-1"><path d="M0 24.500l2-7a11.800 11.800 0 1 1 5 5.500z" fill="#fff" /><circle cx="12.800" cy="12" r="10.200" fill="#40c351" /><path d="M2 23l2-6l4 4z" fill="#40c351" /></svg>
        <FaWhatsapp size={17} className="col-start-1 row-start-1 hidden" />
        <svg width="25" height="25" viewBox="0 0 25 25" className="col-start-1 row-start-1"><path d="M8 6.500l2-.5l1.500 3.500l-1.200 1.500q1.500 3 4.200 4l1.500-1.500l3.300 1.500q0 3-3.500 3.300q-8-1.800-9.500-8.500q0-2 1.700-3.300z" fill="#fff" /></svg>
      </div>
    ),
  },
  { w: "w-[49px]", line: "w-[40px]", el: <Chrome badge="M" /> },
  { w: "w-[49px]", line: "w-[40px]", el: <svg width="19" height="19" viewBox="0 0 19 19"><circle cx="9.500" cy="9.500" r="5.300" fill="none" stroke="#fff" strokeWidth="2.600" /><circle cx="9.500" cy="9.500" r="7.800" fill="none" stroke="#fff" strokeWidth="2.800" strokeDasharray="3 3.126" /></svg> },
  { w: "w-[49px]", line: "w-[40px]", split: true, el: <svg width="22" height="23" viewBox="0 0 22 23"><path d="M11 3h11v17h-11z" fill="#fff" /><path d="M13 6h8M13 9h8M13 12h8M13 15h8M13 18h8" stroke="#2b5797" /><path d="M0 2.500l13-2.500v23l-13-2.500z" fill="#2b579a" /><text x="6.500" y="15.500" fontSize="10" fontWeight="700" textAnchor="middle" fill="#fff">W</text></svg> },
  { w: "w-[49px]", line: "w-[40px]", el: <svg width="23" height="23" viewBox="0 0 23 23"><path d="M8 1l14 4l-4 17l-17-4z" fill="#5fb1c2" /><path d="M8 1l14 4l-2 8q-9-3-15-1z" fill="#a5dbe5" /><path d="M22 4l-1 15l-3 3z" fill="#e8e2c8" /><path d="M8 1.500l13 3.500" stroke="#ddd" strokeWidth="2" strokeDasharray="1 1" /></svg> },
  { w: "w-[48px]", line: "w-[48px]", active: true, el: <AppLogo size={22} /> },
];

function Taskbar() {
  return (
    <div className="flex h-[40px] shrink-0 items-stretch bg-linear-to-r from-[#1f1f1f] via-[#1b222a] to-[#1f1f1f] text-white">
      {taskIcons.map((t, i) => (
        <div key={i} className={`flex shrink-0 flex-col items-center ${t.w} ${t.active ? "bg-[#4b5053]" : ""}`}>
          <div className="flex h-[38px] items-center pt-[1px]">{t.el}</div>
          {t.line && (
            <div className={`flex h-[2px] bg-[#76b9ed] ${t.line}`}>{t.split && <div className="ml-auto w-[9px] bg-[#55809f]" />}</div>
          )}
        </div>
      ))}
      <div className="ml-[167px] flex items-center">
        <div className="h-5 w-5 rounded-full bg-linear-to-br from-[#f3bd33] to-[#ef6a0c]" />
        <Fit w={30} className="ml-[10px] text-[14px]">34°C</Fit>
        <Fit w={58} className="ml-[8px] text-[14px]">Ensoleillé</Fit>
        <div className="ml-[25px]"><Ico smooth w={12} h={8} s={[["M.5 7l5.500-5.500l5.500 5.500", "#fff"]]} /></div>
        <div className="ml-[12px]"><Ico smooth w={15} h={14} s={[["M1 13q0-12 13-12", "#aaa"], ["M4 13q0-9 10-9M7 13q0-6 7-6M10 13q0-3 4-3", "#fff"]]} /></div>
        <div className="ml-[10px]"><Ico smooth w={14} h={18} s={[["M1.500 5.500h7v8h-7zM8.500 8l3-1.500v6l-3-1.500M2.500 2.500q3-2 6 0M2.500 16q3 2 6 0M4 9.500h2", "#fff"]]} /></div>
        <div className="ml-[8px]"><Ico smooth w={18} h={16} s={[["M1 6h3l4-4v12l-4-4h-3zM10 5q2 3 0 6", "#fff"], ["M12 3q4 5 0 10M14.500 1.500q5 6.500 0 13", "#ccc"]]} /></div>
        <div className="ml-[6px]"><Ico smooth w={17} h={16} s={[["M5.500 4.500h10v8h-10zM2 2v3M5 2v3M1 5.500h5v2l-2.500 2l-2.500-2zM3.500 9v3.500h2", "#fff"], ["M8 7h5v4h-5z", "none", "#fff"]]} /></div>
        <div className="ml-[10px]"><Ico smooth w={18} h={18} s={[["M5 15l1-5l7-8l2 2l-6 9l-4 2M1 16q-1-5 4-5M7 8q5 7 9 2", "#fff"]]} /></div>
        <Fit w={21} className="ml-[13px] text-[12px]">FRA</Fit>
        <div className="ml-[13px] flex w-[60px] flex-col items-center gap-[1px] pb-px leading-[17px]">
          <Fit w={26}>18:03</Fit>
          <Fit w={58}>24/09/2023</Fit>
        </div>
        <div className="ml-[4px] flex h-full w-[40px] items-center justify-center bg-[#292929]">
          <Ico smooth w={17} h={18} s={[["M.5 1.500h15.500v12h-5l-2.700 3l-2.700-3h-5z", "#fff"]]} />
        </div>
      </div>
      <div className="mr-[4px] ml-auto w-px bg-[#666]" />
    </div>
  );
}

export default function App() {
  return (
    <div className="flex h-[900px] w-[1600px] flex-col overflow-hidden bg-[#f0f0f0] font-['Open_Sans',sans-serif] text-[12px] leading-[16px] text-black">
      <TitleAndMenu />
      <Toolbars />
      <div className="flex h-[660px] shrink-0">
        <Toolbox />
        <Center />
        <InstrumentBar />
      </div>
      <Results />
      <Status />
      <Taskbar />
    </div>
  );
}
